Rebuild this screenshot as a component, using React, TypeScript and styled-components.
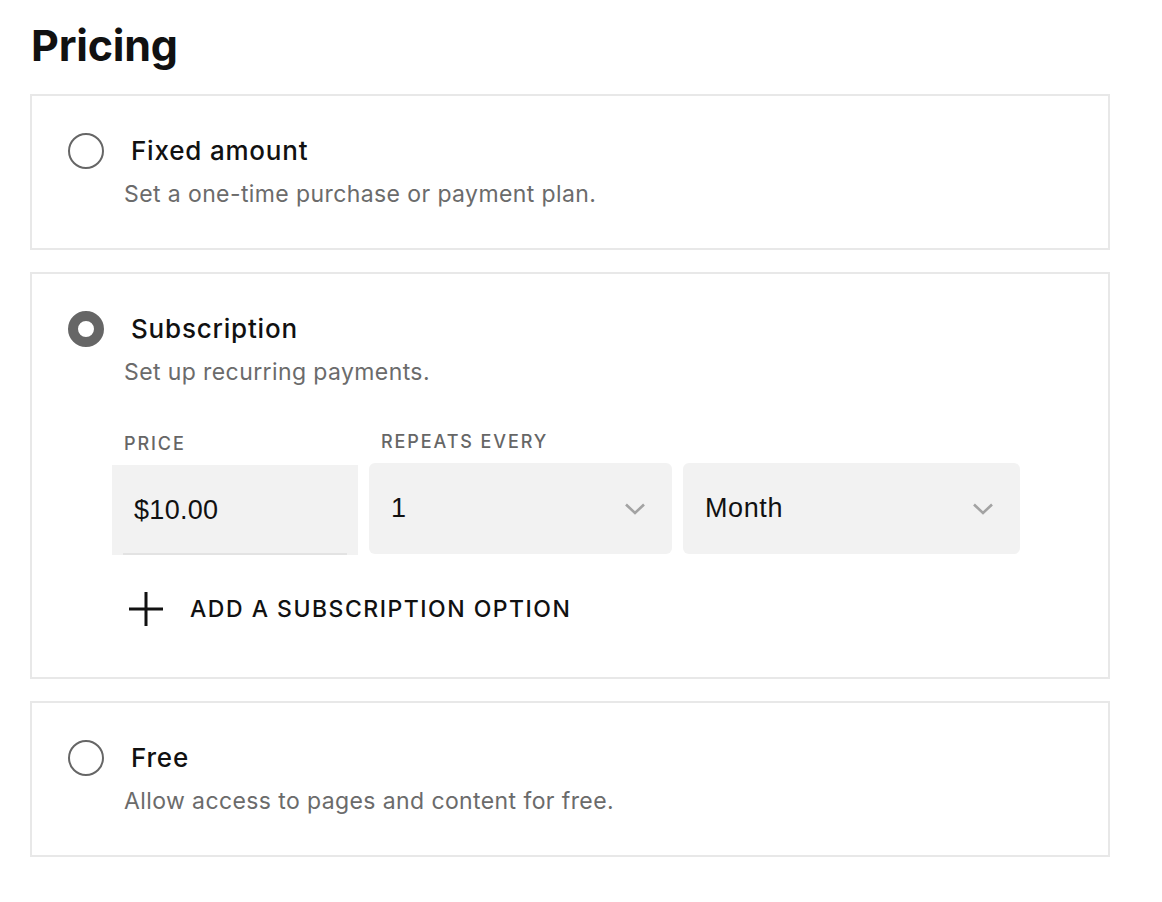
import React, { useState } from "react";
import styled, { createGlobalStyle } from "styled-components";

const GlobalStyle = createGlobalStyle`
  html, body {
    margin: 0;
    padding: 0;
    background: #ffffff;
    font-family: Inter, "Liberation Sans", Arial, sans-serif;
    color: #111111;
  }
`;

const Page = styled.div`
  display: flex;
  flex-direction: column;
  width: 1080px;
  padding: 18px 0 40px 30px;
`;

const Title = styled.h1`
  margin: 0 0 21px 1px;
  font-size: 43px;
  line-height: 55px;
  font-weight: 700;
  letter-spacing: -0.2px;
  color: #111;
`;

const Options = styled.div`
  display: flex;
  flex-direction: column;
  gap: 22px;
`;

const Card = styled.div`
  border: 2px solid #e8e8e8;
  padding: 37px 36px 39px 36px;
  display: flex;
  flex-direction: column;
`;

const Header = styled.label`
  display: flex;
  align-items: center;
  gap: 27px;
  cursor: pointer;
`;

const Radio = styled.span<{ $checked: boolean }>`
  box-sizing: border-box;
  width: 36px;
  height: 36px;
  border-radius: 50%;
  flex-shrink: 0;
  border: ${(p) => (p.$checked ? "10px solid #666666" : "2px solid #666666")};
  background: #fff;
`;

const OptionTitle = styled.span`
  font-size: 26px;
  line-height: 36px;
  font-weight: 500;
  letter-spacing: 0.8px;
  color: #111;
`;

const Description = styled.p`
  margin: 10px 0 0 56px;
  font-size: 23px;
  line-height: 30px;
  letter-spacing: 0.4px;
  color: #6b6b6b;
`;

const Fields = styled.div`
  display: flex;
  align-items: flex-end;
  gap: 11px;
  margin: 44px 0 0 44px;
`;

const Field = styled.div<{ $width: number }>`
  display: flex;
  flex-direction: column;
  width: ${(p) => p.$width}px;
`;

const FieldLabel = styled.span`
  font-size: 18px;
  line-height: 22px;
  font-weight: 500;
  letter-spacing: 1.9px;
  color: #666;
  padding-left: 12px;
  margin-bottom: 10px;
  white-space: nowrap;
`;

const PriceBox = styled.div`
  position: relative;
  height: 90px;
  background: #f2f2f2;
  display: flex;
  align-items: center;
  padding-left: 22px;
  font-family: "Liberation Sans", Arial, sans-serif;
  font-size: 27px;
  letter-spacing: 0.3px;
  color: #111;

  &::after {
    content: "";
    position: absolute;
    left: 11px;
    right: 11px;
    bottom: 0;
    height: 2px;
    background: #e3e3e3;
  }
`;

const SelectBox = styled.div`
  height: 91px;
  margin-bottom: 1px;
  background: #f2f2f2;
  border-radius: 6px;
  display: flex;
  align-items: center;
  justify-content: space-between;
  padding: 0 26px 0 22px;
  font-family: "Liberation Sans", Arial, sans-serif;
  font-size: 27px;
  letter-spacing: 0.6px;
  color: #111;
`;

const Chevron = () => (
  <svg width="22" height="14" viewBox="0 0 22 14" fill="none">
    <path d="M2 2.5L11 11L20 2.5" stroke="#a3a3a3" strokeWidth="2.6" />
  </svg>
);

const AddButton = styled.button`
  display: flex;
  align-items: center;
  gap: 26px;
  margin: 36px 0 11px 60px;
  padding: 0;
  border: none;
  background: none;
  cursor: pointer;
  font-family: Inter, "Liberation Sans", Arial, sans-serif;
  font-size: 23px;
  font-weight: 500;
  letter-spacing: 1.5px;
  color: #111;
  align-self: flex-start;
`;

const PlusIcon = () => (
  <svg width="36" height="36" viewBox="0 0 36 36">
    <path d="M18 1V35M1 18H35" stroke="#111" strokeWidth="3" />
  </svg>
);

type OptionKey = "fixed" | "subscription" | "free";

const options: { key: OptionKey; title: string; desc: string }[] = [
  { key: "fixed", title: "Fixed amount", desc: "Set a one-time purchase or payment plan." },
  { key: "subscription", title: "Subscription", desc: "Set up recurring payments." },
  { key: "free", title: "Free", desc: "Allow access to pages and content for free." },
];

const App: React.FC = () => {
  const [selected, setSelected] = useState<OptionKey>("subscription");

  return (
    <Page>
      <GlobalStyle />
      <Title>Pricing</Title>
      <Options>
        {options.map((opt) => (
          <Card key={opt.key}>
            <Header onClick={() => setSelected(opt.key)}>
              <Radio $checked={selected === opt.key} />
              <OptionTitle>{opt.title}</OptionTitle>
            </Header>
            <Description>{opt.desc}</Description>
            {opt.key === "subscription" && selected === "subscription" && (
              <>
                <Fields>
                  <Field $width={246}>
                    <FieldLabel>PRICE</FieldLabel>
                    <PriceBox>$10.00</PriceBox>
                  </Field>
                  <Field $width={303}>
                    <FieldLabel>REPEATS EVERY</FieldLabel>
                    <SelectBox>
                      1
                      <Chevron />
                    </SelectBox>
                  </Field>
                  <Field $width={337}>
                    <SelectBox>
                      Month
                      <Chevron />
                    </SelectBox>
                  </Field>
                </Fields>
                <AddButton type="button">
                  <PlusIcon />
                  ADD A SUBSCRIPTION OPTION
                </AddButton>
              </>
            )}
          </Card>
        ))}
      </Options>
    </Page>
  );
};

export default App;
